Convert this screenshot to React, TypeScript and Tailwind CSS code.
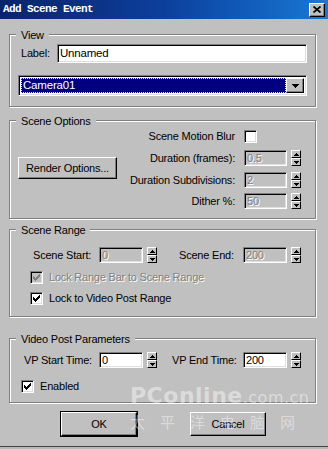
import type { ReactNode } from 'react';

const raised =
  'border border-t-white border-l-white border-r-black border-b-black shadow-[inset_-1px_-1px_0_#808080] bg-[#c0c0c0]';
const sunken =
  'border border-t-[#808080] border-l-[#808080] border-r-white border-b-white shadow-[inset_1px_1px_0_#000,inset_-1px_-1px_0_#dfdfdf]';
const dim = 'text-[#808080] [text-shadow:1px_1px_0_#fff]';

function Group({ title, className, children }: { title: string; className?: string; children: ReactNode }) {
  return (
    <fieldset
      className={`ml-[9px] w-[307px] border border-[#808080] shadow-[inset_1px_1px_0_#fff,1px_1px_0_#fff] ${className ?? ''}`}
    >
      <legend className="ml-[6px] bg-[#c0c0c0] px-[5px] pt-[2px] leading-[13px]">{title}</legend>
      {children}
    </fieldset>
  );
}

function Check({ checked, disabled }: { checked?: boolean; disabled?: boolean }) {
  return (
    <div
      className={`flex h-[13px] w-[13px] shrink-0 items-center justify-center ${sunken} ${disabled ? 'bg-[#c0c0c0]' : 'bg-white'}`}
    >
      {checked && (
        <svg width="7" height="7" viewBox="0 0 7 7">
          <path
            d="M6 0h1v3h-1z M5 1h1v3h-1z M4 2h1v3h-1z M3 3h1v3h-1z M2 4h1v3h-1z M1 3h1v3h-1z M0 2h1v3h-1z"
            fill={disabled ? '#808080' : '#000'}
          />
        </svg>
      )}
    </div>
  );
}

function Spinner() {
  return (
    <div className="ml-[4px] flex h-[16px] w-[10px] shrink-0 flex-col">
      <div className={`flex h-[8px] items-center justify-center ${raised} shadow-none`}>
        <svg width="5" height="3" viewBox="0 0 5 3">
          <path d="M2 0h1v1h-1z M1 1h3v1h-3z M0 2h5v1h-5z" fill="#000" />
        </svg>
      </div>
      <div className={`flex h-[8px] items-center justify-center ${raised} shadow-none`}>
        <svg width="5" height="3" viewBox="0 0 5 3">
          <path d="M0 0h5v1h-5z M1 1h3v1h-3z M2 2h1v1h-1z" fill="#000" />
        </svg>
      </div>
    </div>
  );
}

function Field({ value, w, disabled }: { value: string; w: string; disabled?: boolean }) {
  return (
    <div className="flex items-center">
      <div
        className={`flex h-[16px] ${w} items-center pl-[2px] leading-none ${sunken} ${disabled ? `bg-[#c0c0c0] ${dim}` : 'bg-white'}`}
      >
        {value}
      </div>
      <Spinner />
    </div>
  );
}

function OptRow({ label, value, className }: { label: string; value: string; className?: string }) {
  return (
    <div className={`flex h-[16px] items-center justify-end ${className ?? ''}`}>
      <span>{label}</span>
      <div className="ml-[9px] w-[57px]">
        <Field value={value} w="w-[43px]" disabled />
      </div>
    </div>
  );
}

function Button({ label, className }: { label: string; className?: string }) {
  return (
    <div className={`flex items-center justify-center ${raised} ${className ?? ''}`}>{label}</div>
  );
}

export default function App() {
  return (
    <div className="relative flex h-[449px] w-[328px] flex-col overflow-hidden bg-[#c0c0c0] font-['Liberation_Sans',Arial,sans-serif] text-[11px] tracking-[-0.2px] text-black">
      {/* title bar */}
      <div className="flex h-[19px] shrink-0 items-center bg-linear-to-r from-[#0a246a] via-[#0c3f9c] to-[#1a78d6] pl-[3px] pr-[3px]">
        <span className="font-['Liberation_Mono',monospace] text-[11px] font-bold tracking-[-0.6px] text-white">
          Add Scene Event
        </span>
        <div className={`ml-auto flex h-[14px] w-[16px] items-center justify-center ${raised}`}>
          <svg width="8" height="7" viewBox="0 0 8 7">
            <path d="M0.5 0.5 L7.5 6.5 M7.5 0.5 L0.5 6.5" stroke="#000" strokeWidth="1.7" />
          </svg>
        </div>
      </div>

      {/* View */}
      <Group title="View" className="mt-[8px] pb-[10px]">
        <div className="mt-[2px] flex items-center pl-[11px]">
          <span className="w-[36px]">Label:</span>
          <div className={`flex h-[19px] w-[250px] items-center bg-white pl-[2px] text-[11.5px] ${sunken}`}>
            Unnamed
          </div>
        </div>
        <div className={`ml-[8px] mt-[12px] flex h-[21px] w-[289px] bg-white p-[2px] ${sunken}`}>
          <div className="flex flex-1 items-center border border-dotted border-[#ffff80] bg-[#000080] pl-[1px] text-[11.5px] text-white">
            Camera01
          </div>
          <div className={`flex w-[18px] items-center justify-center ${raised}`}>
            <svg width="7" height="4" viewBox="0 0 7 4">
              <path d="M0 0h7v1h-7z M1 1h5v1h-5z M2 2h3v1h-3z M3 3h1v1h-1z" fill="#000" />
            </svg>
          </div>
        </div>
      </Group>

      {/* Scene Options */}
      <Group title="Scene Options" className="mt-[6px] pb-[9px]">
        <div className="flex">
          <Button label="Render Options..." className="ml-[8px] mt-[29px] h-[22px] w-[99px] shrink-0" />
          <div className="flex flex-1 flex-col pr-[14px] pt-[2px]">
            <div className="flex h-[13px] items-center justify-end">
              <span>Scene Motion Blur</span>
              <div className="ml-[9px] w-[57px]">
                <Check />
              </div>
            </div>
            <OptRow label="Duration (frames):" value="0.5" className="mt-[7px]" />
            <OptRow label="Duration Subdivisions:" value="2" className="mt-[6px]" />
            <OptRow label="Dither %:" value="50" className="mt-[5px]" />
          </div>
        </div>
      </Group>

      {/* Scene Range */}
      <Group title="Scene Range" className="mt-[3px] pb-[11px]">
        <div className="mt-[10px] flex h-[16px] items-center pl-[23px]">
          <span className="w-[66px]">Scene Start:</span>
          <Field value="0" w="w-[44px]" disabled />
          <span className="ml-[22px] w-[64px]">Scene End:</span>
          <Field value="200" w="w-[44px]" disabled />
        </div>
        <div className="mt-[8px] flex h-[13px] items-center pl-[20px]">
          <Check checked disabled />
          <span className={`ml-[6px] ${dim}`}>Lock Range Bar to Scene Range</span>
        </div>
        <div className="mt-[8px] flex h-[13px] items-center pl-[20px]">
          <Check checked />
          <span className="ml-[6px]">Lock to Video Post Range</span>
        </div>
      </Group>

      {/* Video Post Parameters */}
      <Group title="Video Post Parameters" className="mt-[14px] pb-[9px]">
        <div className="mt-[6px] flex h-[16px] items-center pl-[14px]">
          <span className="w-[75px]">VP Start Time:</span>
          <Field value="0" w="w-[44px]" />
          <span className="ml-[15px] w-[71px]">VP End Time:</span>
          <Field value="200" w="w-[44px]" />
        </div>
        <div className="mt-[12px] flex h-[13px] items-center pl-[11px]">
          <Check checked />
          <span className="ml-[6px]">Enabled</span>
        </div>
      </Group>

      {/* buttons */}
      <div className="mt-[9px] flex pl-[61px]">
        <Button label="OK" className="h-[24px] w-[76px] outline outline-1 outline-black" />
        <Button label="Cancel" className="ml-[53px] h-[24px] w-[76px]" />
      </div>

      <div className="mt-auto h-[3px] border-t border-t-[#404040] bg-[#b8b8b8]" />

      {/* watermark */}
      <div className="pointer-events-none absolute left-[130px] top-[385px] flex flex-col text-white/45">
        <div className="flex items-baseline font-['DejaVu_Sans',sans-serif] leading-none">
          <span className="text-[22px] font-bold tracking-[0.5px]">PConline</span>
          <span className="text-[16px] tracking-[0.5px]">.com.cn</span>
        </div>
        <div className="mt-[7px] font-['Noto_Sans_CJK_SC',sans-serif] text-[15px] leading-none tracking-[15px]">
          太平洋电脑网
        </div>
      </div>
    </div>
  );
}
